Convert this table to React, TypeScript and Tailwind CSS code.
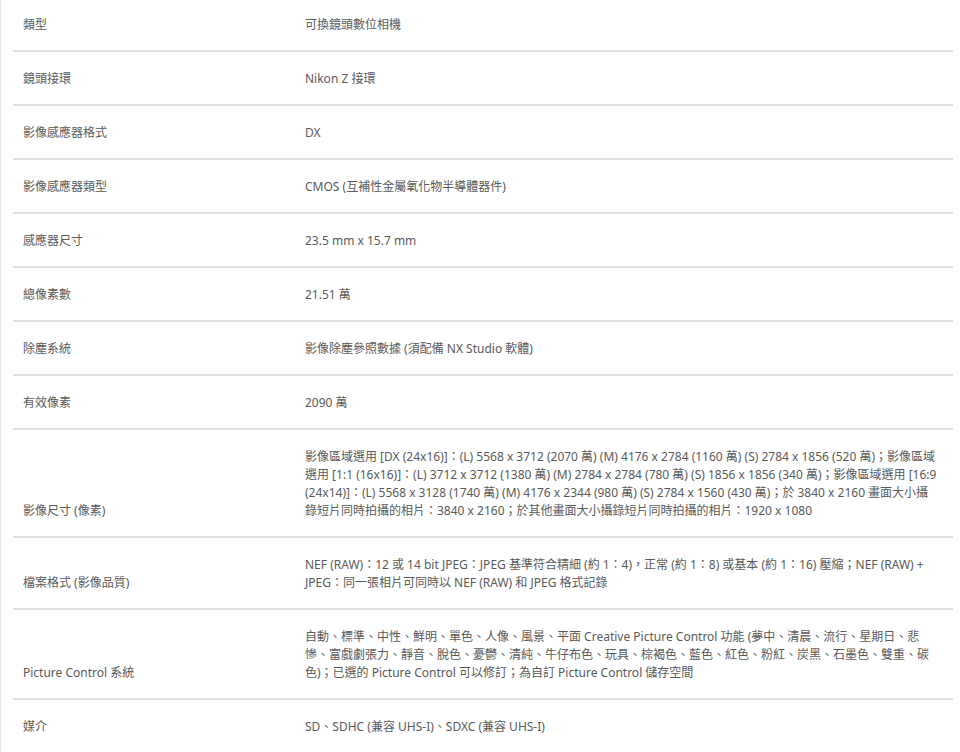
import React from 'react';

interface SpecRow {
  label: string;
  value: string;
}

const specs: SpecRow[] = [
  { label: '類型', value: '可換鏡頭數位相機' },
  { label: '鏡頭接環', value: 'Nikon Z 接環' },
  { label: '影像感應器格式', value: 'DX' },
  { label: '影像感應器類型', value: 'CMOS (互補性金屬氧化物半導體器件)' },
  { label: '感應器尺寸', value: '23.5 mm x 15.7 mm' },
  { label: '總像素數', value: '21.51 萬' },
  { label: '除塵系統', value: '影像除塵參照數據 (須配備 NX Studio 軟體)' },
  { label: '有效像素', value: '2090 萬' },
  {
    label: '影像尺寸 (像素)',
    value:
      '影像區域選用 [DX (24x16)]：(L) 5568 x 3712 (2070 萬) (M) 4176 x 2784 (1160 萬) (S) 2784 x 1856 (520 萬)；影像區域選用 [1:1 (16x16)]：(L) 3712 x 3712 (1380 萬) (M) 2784 x 2784 (780 萬) (S) 1856 x 1856 (340 萬)；影像區域選用 [16:9 (24x14)]：(L) 5568 x 3128 (1740 萬) (M) 4176 x 2344 (980 萬) (S) 2784 x 1560 (430 萬)；於 3840 x 2160 畫面大小攝錄短片同時拍攝的相片：3840 x 2160；於其他畫面大小攝錄短片同時拍攝的相片：1920 x 1080',
  },
  {
    label: '檔案格式 (影像品質)',
    value:
      'NEF (RAW)：12 或 14 bit JPEG：JPEG 基準符合精細 (約 1：4)，正常 (約 1：8) 或基本 (約 1：16) 壓縮；NEF (RAW) + JPEG：同一張相片可同時以 NEF (RAW) 和 JPEG 格式記錄',
  },
  {
    label: 'Picture Control 系統',
    value:
      '自動、標準、中性、鮮明、單色、人像、風景、平面 Creative Picture Control 功能 (夢中、清晨、流行、星期日、悲慘、富戲劇張力、靜音、脫色、憂鬱、清純、牛仔布色、玩具、棕褐色、藍色、紅色、粉紅、炭黑、石墨色、雙重、碳色)；已選的 Picture Control 可以修訂；為自訂 Picture Control 儲存空間',
  },
  { label: '媒介', value: 'SD、SDHC (兼容 UHS-I)、SDXC (兼容 UHS-I)' },
];

const App: React.FC = () => {
  return (
    <div
      className="min-h-[752px] bg-white border-l border-[#e6e6e6] overflow-hidden"
      style={{ fontFamily: '"Noto Sans", "Noto Sans CJK TC", sans-serif' }}
    >
      <div className="ml-[12px] mr-[7px] -mt-[3px] border-t border-[#f0f0f0]">
        {specs.map((row, i) => (
          <div
            key={row.label}
            className={`flex items-end pt-[18px] pb-[16px] text-[12px] leading-[18px] text-[#5a5a5a] ${
              i < specs.length - 1 ? 'border-b-2 border-[#e0e0e0]' : ''
            }`}
          >
            <div className="w-[292px] shrink-0 pl-[10px]">{row.label}</div>
            <div className="flex-1 pr-[15px]">{row.value}</div>
          </div>
        ))}
      </div>
    </div>
  );
};

export default App;
